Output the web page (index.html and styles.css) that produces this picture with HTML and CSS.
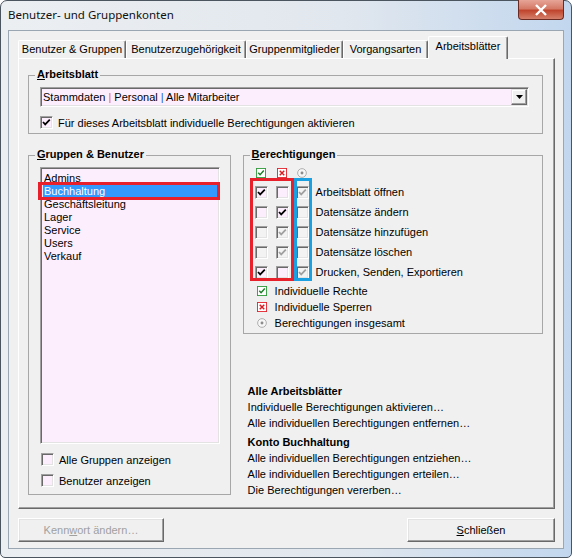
FILE: index.html
```html
<!DOCTYPE html>
<html lang="de">
<head>
<meta charset="UTF-8" />
<title>Benutzer- und Gruppenkonten</title>
<link rel="stylesheet" href="styles.css">
</head>
<body>

<!-- Dialogfenster -->
<div class="window">
  <div class="titlebar">
    <span class="title">Benutzer- und Gruppenkonten</span>
    <span class="close-btn">
      <svg width="14" height="12" viewBox="0 0 14 12"><path d="M2 1 L12 11 M12 1 L2 11" /></svg>
    </span>
  </div>

  <div class="client">
    <!-- Reiter -->
    <div class="tabs">
      <div class="tab t1">Benutzer &amp; Gruppen</div>
      <div class="tab t2">Benutzerzugehörigkeit</div>
      <div class="tab t3">Gruppenmitglieder</div>
      <div class="tab t4">Vorgangsarten</div>
      <div class="tab t5 active">Arbeitsblätter</div>
    </div>

    <div class="panel">
      <!-- Arbeitsblatt -->
      <div class="group sheet-group">
        <span class="group-title"><u>A</u>rbeitsblatt</span>
        <div class="combo">
          <span class="combo-text">Stammdaten <span class="sep-o">|</span> Personal <span class="sep-b">|</span> Alle Mitarbeiter</span>
          <span class="combo-btn">
            <svg width="7" height="4" viewBox="0 0 7 4"><path d="M0 0 H7 L3.5 4 Z" /></svg>
          </span>
        </div>
        <div class="check-row">
          <span class="cb on"><svg viewBox="0 0 11 11"><path d="M2 5 L4.2 7.4 L8.8 2.6" /></svg></span>
          <span>Für dieses Arbeitsblatt individuelle Berechtigungen aktivieren</span>
        </div>
      </div>

      <div class="row">
        <!-- Gruppen & Benutzer -->
        <div class="group users-group">
          <span class="group-title"><u>G</u>ruppen &amp; Benutzer</span>
          <div class="listbox">
            <div class="item">Admins</div>
            <div class="item selected">Buchhaltung</div>
            <div class="item">Geschäftsleitung</div>
            <div class="item">Lager</div>
            <div class="item">Service</div>
            <div class="item">Users</div>
            <div class="item">Verkauf</div>
            <div class="mark mark-sel"></div>
          </div>
          <div class="check-row first">
            <span class="cb"></span>
            <span>Alle Gruppen anzeigen</span>
          </div>
          <div class="check-row">
            <span class="cb"></span>
            <span>Benutzer anzeigen</span>
          </div>
        </div>

        <div class="right-col">
          <!-- Berechtigungen -->
          <div class="group rights-group">
            <span class="group-title"><u>B</u>erechtigungen</span>
            <div class="perm-head">
              <span class="hcol">
                <svg class="icon" viewBox="0 0 11 11"><rect x="0.5" y="0.5" width="10" height="10" fill="#fff" stroke="#2f9a3a" /><path d="M2.5 5.2 L4.5 7.4 L8.6 2.8" fill="none" stroke="#1d7d28" stroke-width="1.6" /></svg>
              </span>
              <span class="hcol">
                <svg class="icon" viewBox="0 0 11 11"><rect x="0.5" y="0.5" width="10" height="10" fill="#fff" stroke="#e2242c" /><path d="M3 3 L8 8 M8 3 L3 8" fill="none" stroke="#d81c22" stroke-width="1.6" /></svg>
              </span>
              <span class="hcol">
                <svg class="icon" viewBox="0 0 11 11"><circle cx="5.5" cy="5.5" r="4.8" fill="#f6f6f6" stroke="#a8a8a8" /><circle cx="5.5" cy="5.5" r="1.6" fill="#8c8c8c" /></svg>
              </span>
            </div>

            <div class="perms">
              <div class="perm-row">
                <span class="cb on"><svg viewBox="0 0 11 11"><path d="M2 5 L4.2 7.4 L8.8 2.6" /></svg></span>
                <span class="cb"></span>
                <span class="cb off on"><svg viewBox="0 0 11 11"><path d="M2 5 L4.2 7.4 L8.8 2.6" /></svg></span>
                <span class="perm-label">Arbeitsblatt öffnen</span>
              </div>
              <div class="perm-row">
                <span class="cb"></span>
                <span class="cb on"><svg viewBox="0 0 11 11"><path d="M2 5 L4.2 7.4 L8.8 2.6" /></svg></span>
                <span class="cb off"></span>
                <span class="perm-label">Datensätze ändern</span>
              </div>
              <div class="perm-row">
                <span class="cb off"></span>
                <span class="cb off on"><svg viewBox="0 0 11 11"><path d="M2 5 L4.2 7.4 L8.8 2.6" /></svg></span>
                <span class="cb off"></span>
                <span class="perm-label">Datensätze hinzufügen</span>
              </div>
              <div class="perm-row">
                <span class="cb off"></span>
                <span class="cb off on"><svg viewBox="0 0 11 11"><path d="M2 5 L4.2 7.4 L8.8 2.6" /></svg></span>
                <span class="cb off"></span>
                <span class="perm-label">Datensätze löschen</span>
              </div>
              <div class="perm-row">
                <span class="cb on"><svg viewBox="0 0 11 11"><path d="M2 5 L4.2 7.4 L8.8 2.6" /></svg></span>
                <span class="cb"></span>
                <span class="cb off on"><svg viewBox="0 0 11 11"><path d="M2 5 L4.2 7.4 L8.8 2.6" /></svg></span>
                <span class="perm-label">Drucken, Senden, Exportieren</span>
              </div>
              <!-- Markierungen -->
              <div class="mark mark-red"></div>
              <div class="mark mark-blue"></div>
            </div>

            <div class="legend">
              <div class="legend-row">
                <svg class="icon" viewBox="0 0 11 11"><rect x="0.5" y="0.5" width="10" height="10" fill="#fff" stroke="#2f9a3a" /><path d="M2.5 5.2 L4.5 7.4 L8.6 2.8" fill="none" stroke="#1d7d28" stroke-width="1.6" /></svg>
                <span>Individuelle Rechte</span>
              </div>
              <div class="legend-row">
                <svg class="icon" viewBox="0 0 11 11"><rect x="0.5" y="0.5" width="10" height="10" fill="#fff" stroke="#e2242c" /><path d="M3 3 L8 8 M8 3 L3 8" fill="none" stroke="#d81c22" stroke-width="1.6" /></svg>
                <span>Individuelle Sperren</span>
              </div>
              <div class="legend-row">
                <svg class="icon" viewBox="0 0 11 11"><circle cx="5.5" cy="5.5" r="4.8" fill="#f6f6f6" stroke="#a8a8a8" /><circle cx="5.5" cy="5.5" r="1.6" fill="#8c8c8c" /></svg>
                <span>Berechtigungen insgesamt</span>
              </div>
            </div>
          </div>

          <!-- Aktionen -->
          <div class="actions">
            <div class="action-title">Alle Arbeitsblätter</div>
            <div class="action">Individuelle Berechtigungen aktivieren…</div>
            <div class="action">Alle individuellen Berechtigungen entfernen…</div>
            <div class="action-title second">Konto Buchhaltung</div>
            <div class="action">Alle individuellen Berechtigungen entziehen…</div>
            <div class="action">Alle individuellen Berechtigungen erteilen…</div>
            <div class="action">Die Berechtigungen vererben…</div>
          </div>
        </div>
      </div>
    </div>

    <!-- Schaltflächen -->
    <div class="buttons">
      <button class="btn btn-pw" disabled>Kenn<u>w</u>ort ändern…</button>
      <button class="btn btn-close"><u>S</u>chließen</button>
    </div>
  </div>
</div>

</body>
</html>
```

FILE: styles.css
```css
/* Grundlayout */
body {
  margin: 0;
  background: #fff;
  font-family: "Liberation Sans", Arial, sans-serif;
  font-size: 11px;
  color: #000;
}

.window {
  width: 572px;
  height: 558px;
  box-sizing: border-box;
  border: 1px solid #4a5560;
  border-radius: 7px 7px 5px 5px;
  padding: 0 7px 8px 7px;
  background: linear-gradient(to right, #eceff2 0%, #e1e7ee 60%, #c2d7ee 100%);
  display: flex;
  flex-direction: column;
}

/* Titelleiste */
.titlebar {
  height: 29px;
  display: flex;
  justify-content: space-between;
  align-items: flex-start;
}

.title {
  font-family: "Noto Sans", sans-serif;
  font-size: 11.5px;
  margin-top: 6px;
  color: #111;
}

.close-btn {
  width: 46px;
  height: 20px;
  margin-top: -1px;
  box-sizing: border-box;
  border: 1px solid #6b2b22;
  border-top: none;
  border-radius: 0 0 4px 4px;
  background: linear-gradient(#e6a598 0%, #d57a67 45%, #c0452e 55%, #d5806b 100%);
  display: flex;
  align-items: center;
  justify-content: center;
}

.close-btn svg path {
  stroke: #fff;
  stroke-width: 2.4;
  fill: none;
}

/* Client-Bereich */
.client {
  flex: 1;
  box-sizing: border-box;
  border: 1px solid #9aa6b2;
  background: #f0f0f0;
  padding: 5px 8px 0 9px;
  display: flex;
  flex-direction: column;
}

/* Reiter */
.tabs {
  height: 22px;
  display: flex;
  align-items: flex-end;
}

.tab {
  height: 18px;
  box-sizing: border-box;
  border-top: 1px solid #fff;
  border-left: 1px solid #fff;
  border-right: 1px solid #696969;
  box-shadow: inset -1px 0 #a0a0a0;
  border-radius: 2px 2px 0 0;
  text-align: center;
  line-height: 17px;
}

.t1 { width: 108px; }
.t2 { width: 120px; }
.t3 { width: 97px; }
.t4 { width: 85px; }
.t5 { width: 80px; }

.tab.active {
  height: 23px;
  margin-bottom: -1px;
  line-height: 19px;
  background: #f0f0f0;
  position: relative;
  z-index: 1;
}

.panel {
  height: 451px;
  box-sizing: border-box;
  border: 1px solid;
  border-color: #fff #696969 #696969 #fff;
  box-shadow: inset -1px -1px #a0a0a0;
  padding: 16px 11px 0 9px;
}

/* Gruppen */
.group {
  position: relative;
  box-sizing: border-box;
  border: 1px solid #a7a7a7;
}

.group-title {
  position: absolute;
  top: -8px;
  left: 6px;
  padding: 0 2px;
  line-height: 13px;
  font-weight: bold;
  background: #f0f0f0;
}

.sheet-group {
  height: 59px;
  padding: 11px 13px 0 11px;
}

/* Auswahlfeld */
.combo {
  height: 20px;
  box-sizing: border-box;
  border: 1px solid;
  border-color: #a0a0a0 #fff #fff #a0a0a0;
  box-shadow: inset 1px 1px #696969, inset -1px -1px #e3e3e3;
  background: #fdeefd;
  display: flex;
  align-items: center;
  justify-content: space-between;
  padding: 0 1px 0 2px;
}

.sep-o { color: #e0700c; }
.sep-b { color: #1e64c8; }

.combo-btn {
  width: 16px;
  height: 16px;
  box-sizing: border-box;
  border: 1px solid;
  border-color: #e3e3e3 #696969 #696969 #e3e3e3;
  box-shadow: inset -1px -1px #a0a0a0, inset 1px 1px #fff;
  background: #f0f0f0;
  display: flex;
  align-items: center;
  justify-content: center;
}

/* Kontrollkästchen */
.check-row {
  display: flex;
  align-items: center;
  gap: 5px;
  height: 13px;
  margin-top: 9px;
}

.cb {
  width: 13px;
  height: 13px;
  flex: none;
  box-sizing: border-box;
  border: 1px solid;
  border-color: #a0a0a0 #fff #fff #a0a0a0;
  box-shadow: inset 1px 1px #696969, inset -1px -1px #e3e3e3;
  background: #fdeefd;
  color: #000;
}

.cb svg {
  display: block;
  width: 11px;
  height: 11px;
}

.cb svg path {
  fill: none;
  stroke: currentColor;
  stroke-width: 1.7;
}

.cb.off {
  background: #f3f3f3;
  color: #a0a0a0;
}

.icon {
  width: 10px;
  height: 10px;
  flex: none;
}

/* Zweite Zeile */
.row {
  display: flex;
  gap: 12px;
  margin-top: 21px;
}

.users-group {
  width: 203px;
  height: 340px;
  padding: 11px 0 0 11px;
}

.listbox {
  position: relative;
  width: 180px;
  height: 277px;
  box-sizing: border-box;
  border: 1px solid;
  border-color: #a0a0a0 #fff #fff #a0a0a0;
  box-shadow: inset 1px 1px #696969, inset -1px -1px #e3e3e3;
  background: #fdeefd;
  padding: 4px 2px 0 2px;
}

.item {
  line-height: 13px;
  padding-left: 1px;
}

.item.selected {
  background: #3399ff;
  color: #fff;
}

.users-group .check-row {
  margin-left: 1px;
  margin-top: 8px;
}

.users-group .check-row.first {
  margin-top: 9px;
}

/* Markierungen */
.mark {
  position: absolute;
  box-sizing: border-box;
  border: 3px solid #e8202c;
}

.mark-sel {
  left: -3px;
  top: 14px;
  width: 182px;
  height: 18px;
}

.mark-red {
  left: 6px;
  top: -4px;
  width: 44px;
  height: 103px;
}

.mark-blue {
  left: 50px;
  top: -4px;
  width: 18px;
  height: 103px;
  border-color: #1ba1e2;
}

/* Berechtigungen */
.right-col {
  width: 301px;
}

.rights-group {
  height: 179px;
  padding-top: 12px;
}

.perm-head {
  display: flex;
  height: 11px;
  padding-left: 11px;
}

.hcol {
  width: 13px;
  display: flex;
  justify-content: center;
  align-items: flex-start;
}

.hcol + .hcol { margin-left: 8px; }
.hcol:last-child { margin-left: 7px; }

.perms {
  position: relative;
  margin-top: 3px;
}

.perm-row {
  height: 20px;
  display: flex;
  align-items: center;
  padding-left: 11px;
}

.perm-row .cb:nth-child(2) { margin-left: 8px; }
.perm-row .cb:nth-child(3) { margin-left: 7px; }

.perm-label {
  margin-left: 7px;
}

.legend {
  padding-left: 13px;
  margin-top: 1px;
}

.legend-row {
  height: 16px;
  display: flex;
  align-items: center;
  gap: 8px;
}

/* Aktionen */
.actions {
  margin-top: 49px;
  padding-left: 5px;
}

.action-title,
.action {
  line-height: 16px;
}

.action-title {
  font-weight: bold;
}

.action-title.second {
  margin-top: 3px;
}

/* Schaltflächen unten */
.buttons {
  display: flex;
  justify-content: space-between;
  margin-top: 9px;
}

.btn {
  height: 24px;
  box-sizing: border-box;
  border: 1px solid;
  border-color: #fff #696969 #696969 #fff;
  box-shadow: inset -1px -1px #a0a0a0, inset 1px 1px #e3e3e3;
  background: #f0f0f0;
  font-family: "Liberation Sans", Arial, sans-serif;
  font-size: 11px;
  color: #000;
  padding: 0;
}

.btn-pw {
  width: 146px;
  color: #a0a0a0;
}

.btn-close {
  width: 148px;
}
```
